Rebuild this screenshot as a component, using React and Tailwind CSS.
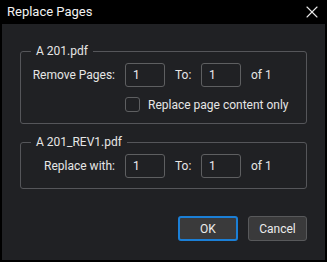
import { X } from 'lucide-react';

function Field({ value }) {
  return (
    <input
      readOnly
      value={value}
      className="w-[40px] h-[24px] rounded-[3px] border border-[#5e5f61] bg-[#202124] px-[7px] text-[12px] text-[#ececec] outline-none"
    />
  );
}

function Group({ title, children, className = '' }) {
  return (
    <div className={`relative mx-[18px] rounded-[3px] border border-[#55565a] ${className}`}>
      <span className="absolute left-[10px] top-[-8px] bg-[#202124] px-[5px] text-[12px] leading-[14px] text-[#e6e6e6]">
        {title}
      </span>
      {children}
    </div>
  );
}

function PageRow({ label }) {
  return (
    <div className="flex items-center h-[24px] text-[12px] text-[#e6e6e6]">
      <span className="w-[94px] text-right">{label}</span>
      <div className="ml-[10px]"><Field value="1" /></div>
      <span className="ml-[10px] w-[16px]">To:</span>
      <div className="ml-[10px]"><Field value="1" /></div>
      <span className="ml-[10px]">of 1</span>
    </div>
  );
}

export default function App() {
  return (
    <div
      className="w-[327px] h-[262px] bg-black flex flex-col select-none"
      style={{ fontFamily: 'Roboto, "Liberation Sans", sans-serif' }}
    >
      {/* Title bar */}
      <div className="h-[24px] flex items-center justify-between pl-[7px] pr-[5px]">
        <span className="text-[13px] text-[#f2f2f2]">Replace Pages</span>
        <X size={20} strokeWidth={1.3} className="text-[#e8e8e8]" />
      </div>

      {/* Body */}
      <div className="flex-1 mx-[2px] mb-[2px] bg-[#202124] flex flex-col">
        <Group title="A 201.pdf" className="mt-[27px] pt-[11px] pb-[11px]">
          <PageRow label="Remove Pages:" />
          <div className="flex items-center mt-[10px] ml-[104px] h-[15px]">
            <span className="w-[15px] h-[15px] rounded-[3px] border border-[#5e5f61]" />
            <span className="ml-[8px] text-[12px] text-[#e6e6e6]">Replace page content only</span>
          </div>
        </Group>

        <Group title="A 201_REV1.pdf" className="mt-[18px] pt-[11px] pb-[10px]">
          <PageRow label="Replace with:" />
        </Group>

        <div className="flex justify-end gap-[10px] mt-[27px] mr-[18px]">
          <button className="w-[60px] h-[25px] rounded-[3px] border-2 border-[#1b7fd6] bg-[#3a3a3b] text-[12px] text-[#ececec]">
            OK
          </button>
          <button className="w-[59px] h-[25px] rounded-[3px] border border-[#58595b] bg-[#3a3a3b] text-[12px] text-[#ececec]">
            Cancel
          </button>
        </div>
      </div>
    </div>
  );
}
